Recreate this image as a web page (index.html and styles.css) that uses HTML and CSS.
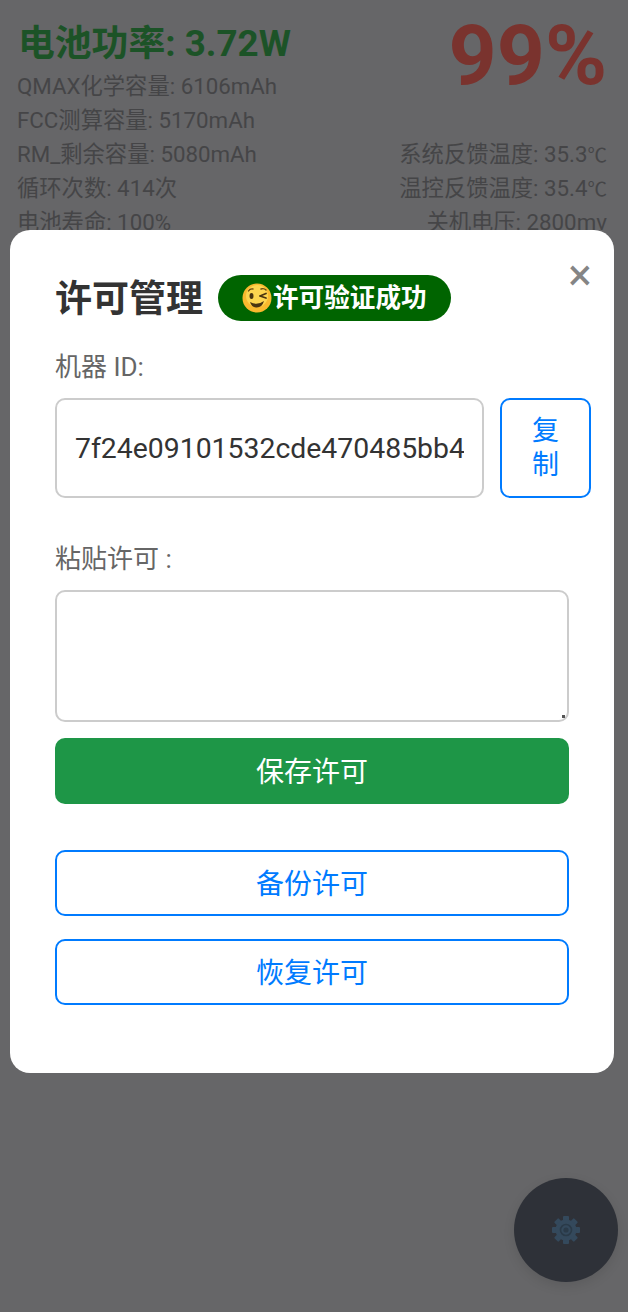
FILE: index.html
```html
<!DOCTYPE html>
<html lang="zh-CN">
<head>
    <meta charset="UTF-8">
    <meta name="viewport" content="width=device-width, initial-scale=1.0">
    <title>许可管理</title>
    <link rel="stylesheet" href="styles.css">
</head>
<body>

    <main class="stats">
        <div class="stats-left">
            <h1 class="power">电池功率: 3.72W</h1>
            <p>QMAX化学容量: 6106mAh</p>
            <p>FCC测算容量: 5170mAh</p>
            <p>RM_剩余容量: 5080mAh</p>
            <p>循环次数: 414次</p>
            <p>电池寿命: 100%</p>
        </div>
        <div class="stats-right">
            <div class="percent">99%</div>
            <p>系统反馈温度: 35.3<span class="deg">℃</span></p>
            <p>温控反馈温度: 35.4<span class="deg">℃</span></p>
            <p>关机电压: 2800mv</p>
        </div>
    </main>

    <button class="fab" type="button" aria-label="设置">
        <svg class="gear" viewBox="0 0 28 28" width="28" height="28">
            <g fill="#34495c">
                <rect x="11" y="0" width="6" height="28" rx="1"/>
                <rect x="11" y="0" width="6" height="28" rx="1" transform="rotate(45 14 14)"/>
                <rect x="11" y="0" width="6" height="28" rx="1" transform="rotate(90 14 14)"/>
                <rect x="11" y="0" width="6" height="28" rx="1" transform="rotate(135 14 14)"/>
                <circle cx="14" cy="14" r="10.5"/>
            </g>
            <circle cx="14" cy="14" r="5.5" fill="none" stroke="#2a3a48" stroke-width="1.6"/>
            <circle cx="14" cy="14" r="2.6" fill="#2a3a48"/>
        </svg>
    </button>

    <div class="overlay">
        <section class="modal">
            <button class="close" type="button" aria-label="关闭">×</button>

            <header class="modal-head">
                <h2>许可管理</h2>
                <span class="badge">
                    <svg class="wink" viewBox="0 0 30 30" width="30" height="30">
                        <circle cx="15" cy="15" r="14.5" fill="#f9b92e"/>
                        <circle cx="15" cy="13" r="11" fill="#fdd54f"/>
                        <ellipse cx="9.5" cy="13" rx="2" ry="3" fill="#4a3410"/>
                        <path d="M18 13 L24 10.5 M18 13 L24 15" stroke="#4a3410" stroke-width="1.8" fill="none" stroke-linecap="round"/>
                        <path d="M6.5 8 Q8 5.5 11 6 M19 6 Q22 5 24 7" stroke="#6b4a10" stroke-width="1.4" fill="none" stroke-linecap="round"/>
                        <path d="M8 19 Q15 23 22 18 Q20 25 14 24.5 Q9.5 24 8 19 Z" fill="#4a3410"/>
                    </svg>许可验证成功</span>
            </header>

            <label class="field-label" for="machine-id">机器 ID:</label>
            <div class="id-row">
                <input id="machine-id" class="id-input" type="text" value="7f24e09101532cde470485bb4" readonly>
                <button class="btn-outline btn-copy" type="button">复制</button>
            </div>

            <label class="field-label paste-label" for="license">粘贴许可 :</label>
            <textarea id="license" class="license-box"></textarea>

            <button class="btn-save" type="button">保存许可</button>

            <div class="backup-btns">
                <button class="btn-outline" type="button">备份许可</button>
                <button class="btn-outline" type="button">恢复许可</button>
            </div>
        </section>
    </div>

</body>
</html>
```

FILE: styles.css
```css
* {
    box-sizing: border-box;
}

html, body {
    height: 100%;
}

body {
    margin: 0;
    overflow: hidden;
    background-color: #666668;
    font-family: Roboto, "Noto Sans CJK SC", sans-serif;
}

button, input, textarea {
    font-family: inherit;
}

/* page behind the dialog */
.stats {
    display: flex;
    justify-content: space-between;
    padding: 21px 21px 0 17px;
    color: #454547;
    font-size: 22.3px;
}

.stats p {
    margin: 0;
    height: 34px;
    line-height: 34px;
    white-space: nowrap;
}

.deg {
    font-size: 19.5px;
}

.power {
    margin: 0 0 2px 1px;
    height: 46px;
    line-height: 46px;
    font-size: 36.8px;
    font-weight: 700;
    color: #1c5327;
}

.stats-right {
    display: flex;
    flex-direction: column;
    align-items: flex-end;
}

.percent {
    height: 116px;
    line-height: 70px;
    font-size: 84px;
    font-weight: 700;
    color: #7a332e;
}

.fab {
    position: absolute;
    left: 514px;
    top: 1178px;
    display: flex;
    align-items: center;
    justify-content: center;
    width: 104px;
    height: 104px;
    padding: 0;
    border: none;
    border-radius: 50%;
    background-color: #2e3138;
    box-shadow: 0 4px 12px rgba(0, 0, 0, 0.1);
}

/* dialog */
.overlay {
    position: absolute;
    top: 0;
    left: 0;
    width: 100%;
    padding: 230px 14px 0 10px;
}

.modal {
    position: relative;
    height: 843px;
    padding: 45px 45px 0;
    border-radius: 20px;
    background-color: #fff;
}

.close {
    position: absolute;
    top: 20px;
    right: 14px;
    width: 40px;
    height: 50px;
    padding: 0;
    border: none;
    background: none;
    color: #858585;
    font-size: 44px;
    font-weight: 400;
    line-height: 50px;
}

.modal-head {
    display: flex;
    align-items: center;
    gap: 15px;
    height: 46px;
    margin-bottom: 29px;
}

.modal-head h2 {
    margin: 0;
    padding-bottom: 5px;
    font-size: 37px;
    font-weight: 700;
    color: #333;
}

.badge {
    display: flex;
    align-items: center;
    height: 46px;
    padding: 0 24px 5px;
    border-radius: 23px;
    background-color: #006400;
    color: #fff;
    font-size: 25.6px;
    font-weight: 700;
}

.wink {
    flex: none;
    margin: 5px 1px 0 0;
}

.field-label {
    display: block;
    height: 34px;
    line-height: 34px;
    font-size: 26px;
    color: #666;
}

.id-row {
    display: flex;
    gap: 16px;
    width: 536px;
    height: 100px;
    margin-top: 14px;
}

.id-input {
    width: 430px;
    height: 100px;
    padding: 0 18px;
    border: 2px solid #ccc;
    border-radius: 10px;
    outline: none;
    color: #333;
    font-size: 28.4px;
}

.paste-label {
    margin-top: 44px;
}

.license-box {
    display: block;
    width: 100%;
    height: 132px;
    margin-top: 14px;
    border: 2px solid #ccc;
    border-radius: 10px;
    outline: none;
}

/* only a small dot in the corner, not the usual grip lines */
.license-box::-webkit-resizer {
    background: linear-gradient(#555, #555) no-repeat right 2px bottom 2px / 3px 3px;
}

.btn-save, .btn-outline {
    display: block;
    width: 100%;
    height: 66px;
    padding: 0 0 3px;
    border-radius: 10px;
    font-size: 28px;
}

.btn-save {
    margin-top: 16px;
    border: none;
    background-color: #1e9647;
    color: #fff;
}

.btn-outline {
    border: 2px solid #007bff;
    background-color: #fff;
    color: #007bff;
}

.btn-copy {
    flex: none;
    width: 91px;
    height: 100px;
    padding: 0 20px;
    line-height: 34px;
    font-size: 27px;
}

.backup-btns {
    display: grid;
    gap: 23px;
    margin-top: 46px;
}
```
